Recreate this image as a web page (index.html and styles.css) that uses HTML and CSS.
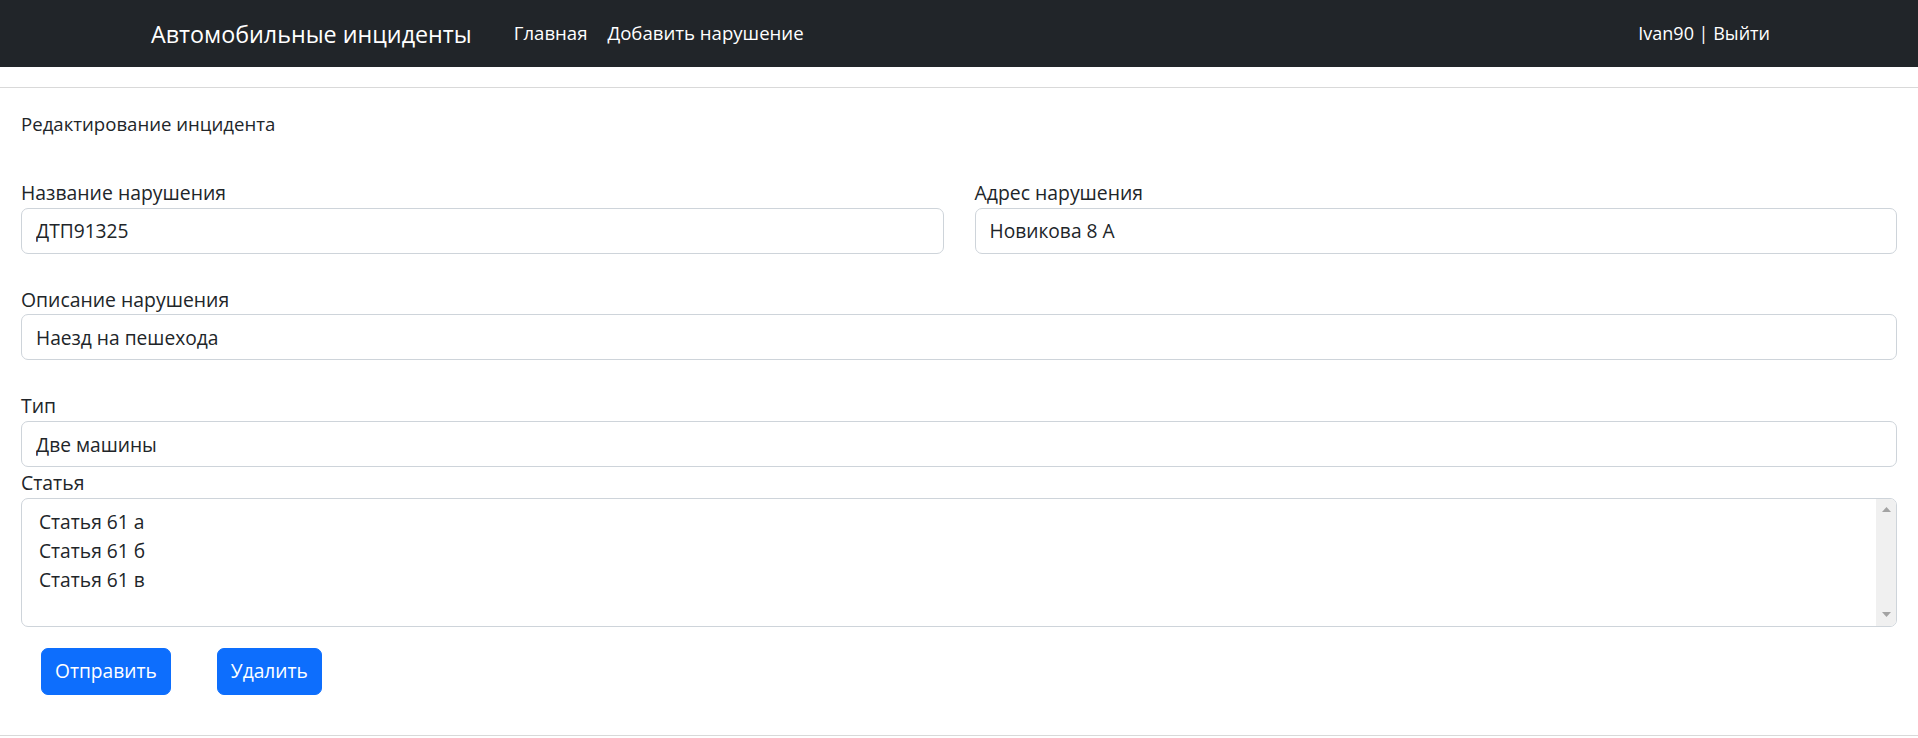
FILE: index.html
```html
<!DOCTYPE html>
<html lang="ru">
<head>
<meta charset="utf-8">
<title>Редактирование инцидента</title>
<link rel="stylesheet" href="styles.css">
</head>
<body>
<header class="site-header">
  <nav class="navbar">
    <a class="brand" href="#">Автомобильные инциденты</a>
    <ul class="nav-links">
      <li><a href="#">Главная</a></li>
      <li><a href="#">Добавить нарушение</a></li>
    </ul>
    <div class="user">Ivan90 | Выйти</div>
  </nav>
</header>
<main class="page">
  <h5 class="title">Редактирование инцидента</h5>
  <form class="form">
    <div class="row-two">
      <div class="field">
        <label>Название нарушения</label>
        <input class="control" type="text" value="ДТП91325">
      </div>
      <div class="field">
        <label>Адрес нарушения</label>
        <input class="control" type="text" value="Новикова 8 А">
      </div>
    </div>
    <div class="field">
      <label>Описание нарушения</label>
      <input class="control" type="text" value="Наезд на пешехода">
    </div>
    <div class="field field-tight">
      <label>Тип</label>
      <input class="control" type="text" value="Две машины">
    </div>
    <div class="field field-area">
      <label>Статья</label>
      <div class="area-wrap">
        <textarea class="control area">Статья 61 а
Статья 61 б
Статья 61 в</textarea>
        <div class="fake-scroll" aria-hidden="true">
          <svg width="9" height="5" viewBox="0 0 9 5"><polygon points="4.5,0 9,5 0,5" fill="#a3a3a3"/></svg>
          <svg width="9" height="5" viewBox="0 0 9 5"><polygon points="0,0 9,0 4.5,5" fill="#a3a3a3"/></svg>
        </div>
      </div>
    </div>
    <div class="actions">
      <button type="button" class="btn">Отправить</button>
      <button type="button" class="btn">Удалить</button>
    </div>
  </form>
</main>
<footer class="site-footer"></footer>
</body>
</html>
```
FILE: styles.css
```css
* { box-sizing: border-box; }
html, body {
  margin: 0;
  padding: 0;
  background: #fff;
}
body {
  font-family: "Open Sans", "Noto Sans", sans-serif;
  font-size: 19.2px;
  line-height: 28.8px;
  color: #212529;
}
.site-header {
  padding-bottom: 20px;
  border-bottom: 1px solid #d9d9d9;
}
.navbar {
  height: 67px;
  background: #212529;
  display: flex;
  align-items: center;
  padding: 0 148px 0 151px;
}
.brand {
  color: #fff;
  text-decoration: none;
  font-size: 23.3px;
  line-height: 36px;
  margin-right: 32px;
}
.nav-links {
  list-style: none;
  display: flex;
  margin: 0;
  padding: 0;
  flex: 1;
  font-size: 18.6px;
}
.nav-links a {
  color: #fff;
  text-decoration: none;
  display: block;
  padding: 0 10px;
}
.user {
  color: #fff;
  font-size: 18px;
}
.page {
  padding: 22px 21px 40px;
}
.title {
  margin: 0 0 40px;
  font-size: 18.6px;
  font-weight: 400;
  line-height: 28.8px;
}
.form {
  display: flex;
  flex-direction: column;
}
.row-two {
  display: grid;
  grid-template-columns: 1fr 1fr;
  column-gap: 31px;
}
.field {
  display: flex;
  flex-direction: column;
  margin-bottom: 32px;
}
.field-tight {
  margin-bottom: 2px;
}
.field-area {
  margin-bottom: 21px;
}
label {
  display: block;
  line-height: 28.8px;
  font-size: 19.4px;
}
.control {
  font: inherit;
  color: #212529;
  height: 46px;
  padding: 7px 14px;
  border: 1px solid #ced4da;
  border-radius: 7px;
  background: #fff;
  width: 100%;
  outline: none;
}
.area-wrap {
  position: relative;
}
.area {
  display: block;
  height: 129px;
  resize: none;
  overflow: hidden;
  line-height: 28.8px;
  padding: 9.5px 30px 7px 17px;
}
.fake-scroll {
  position: absolute;
  top: 1px;
  right: 1px;
  bottom: 1px;
  width: 20px;
  background: #f0f0f0;
  border-radius: 0 6px 6px 0;
  display: flex;
  flex-direction: column;
  align-items: center;
  justify-content: space-between;
  padding: 8px 0 9px;
}
.fake-scroll svg {
  display: block;
}
.actions {
  display: flex;
  gap: 46px;
  padding-left: 20px;
}
.btn {
  font: inherit;
  color: #fff;
  background: #0d6efd;
  border: 1px solid #0d6efd;
  border-radius: 7px;
  height: 47px;
  padding: 0 13px;
  cursor: pointer;
}
.site-footer {
  border-top: 1px solid #d9d9d9;
  height: 2px;
}
```
